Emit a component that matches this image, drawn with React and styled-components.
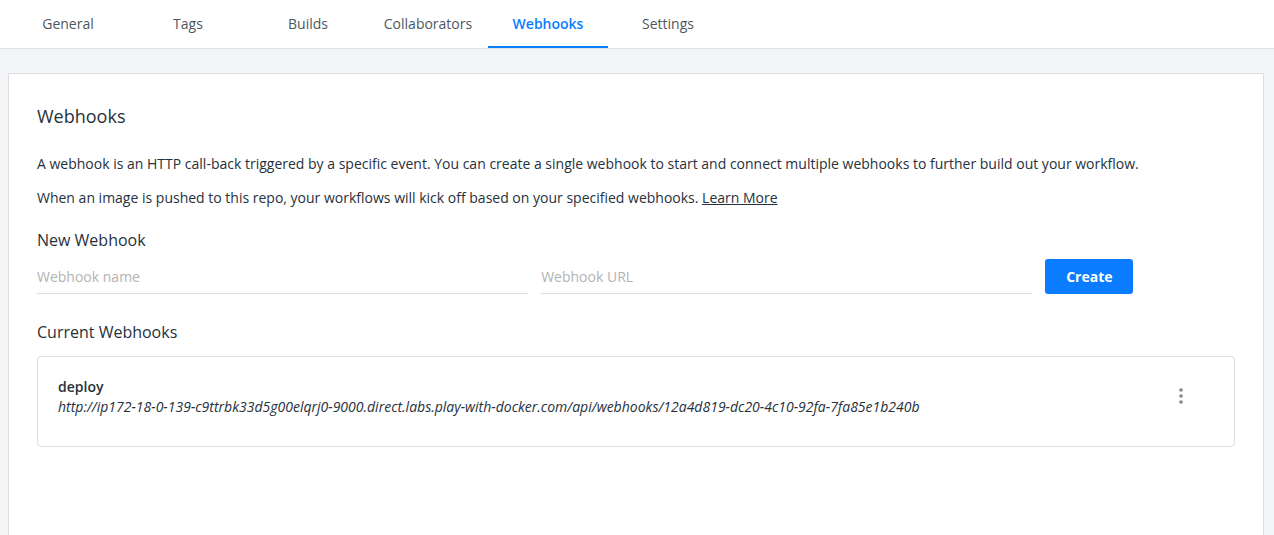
import React from 'react';
import styled, { createGlobalStyle } from 'styled-components';

const GlobalStyle = createGlobalStyle`
  html, body {
    margin: 0;
    padding: 0;
    overflow: hidden;
  }
  body {
    font-family: "Open Sans", "Liberation Sans", sans-serif;
    background: #f4f5f7;
    color: #27313b;
  }
`;

const tabs = ['General', 'Tags', 'Builds', 'Collaborators', 'Webhooks', 'Settings'];

const webhooks = [
  {
    name: 'deploy',
    url: 'http://ip172-18-0-139-c9ttrbk33d5g00elqrj0-9000.direct.labs.play-with-docker.com/api/webhooks/12a4d819-dc20-4c10-92fa-7fa85e1b240b',
  },
];

function KebabIcon() {
  return (
    <svg width="6" height="18" viewBox="0 0 6 18">
      <circle cx="3" cy="3" r="1.8" fill="#7d8b97" />
      <circle cx="3" cy="9" r="1.8" fill="#7d8b97" />
      <circle cx="3" cy="15" r="1.8" fill="#7d8b97" />
    </svg>
  );
}

export default function App() {
  return (
    <Page>
      <GlobalStyle />
      <TabBar>
        {tabs.map((t) => (
          <Tab key={t} $active={t === 'Webhooks'}>{t}</Tab>
        ))}
      </TabBar>
      <Main>
        <Card>
          <Heading>Webhooks</Heading>
          <Text>
            A webhook is an HTTP call-back triggered by a specific event. You can create a single webhook to start and connect multiple webhooks to further build out your workflow.
          </Text>
          <Text>
            When an image is pushed to this repo, your workflows will kick off based on your specified webhooks. <LearnMore href="#">Learn More</LearnMore>
          </Text>
          <SubHeading $top={21}>New Webhook</SubHeading>
          <FormRow>
            <Input placeholder="Webhook name" />
            <Input placeholder="Webhook URL" />
            <CreateButton>Create</CreateButton>
          </FormRow>
          <SubHeading $top={27}>Current Webhooks</SubHeading>
          <HookList>
            {webhooks.map((w) => (
              <HookItem key={w.name}>
                <HookInfo>
                  <HookName>{w.name}</HookName>
                  <HookUrl>{w.url}</HookUrl>
                </HookInfo>
                <MenuButton aria-label="menu">
                  <KebabIcon />
                </MenuButton>
              </HookItem>
            ))}
          </HookList>
        </Card>
      </Main>
    </Page>
  );
}

const Page = styled.div`
  min-height: 100vh;
`;

const TabBar = styled.nav`
  display: flex;
  background: #fff;
  padding-left: 8px;
  border-bottom: 1px solid #dfe1e5;
`;

const Tab = styled.div`
  width: 120px;
  height: 48px;
  box-sizing: border-box;
  display: flex;
  align-items: center;
  justify-content: center;
  font-size: 14px;
  color: ${(p) => (p.$active ? '#0a7cff' : '#4d5761')};
  font-weight: ${(p) => (p.$active ? 600 : 400)};
  border-bottom: 2px solid ${(p) => (p.$active ? '#0a7cff' : 'transparent')};
  cursor: pointer;
`;

const Main = styled.main`
  padding: 24px 10px 0 8px;
`;

const Card = styled.section`
  background: #fff;
  border: 1px solid #dcdde1;
  padding: 30px 28px 0 28px;
  min-height: 520px;
`;

const Heading = styled.h2`
  margin: 0 0 26px;
  font-size: 18px;
  line-height: 24px;
  font-weight: 400;
  color: #27313b;
`;

const Text = styled.p`
  margin: 0 0 14px;
  font-size: 14px;
  line-height: 20px;
  color: #27313b;
`;

const LearnMore = styled.a`
  color: #27313b;
  text-decoration: underline;
`;

const SubHeading = styled.h3`
  margin: ${(p) => p.$top}px 0 8px;
  font-size: 16px;
  line-height: 22px;
  font-weight: 400;
  color: #27313b;
`;

const FormRow = styled.div`
  display: grid;
  grid-template-columns: 41% 41% auto;
  column-gap: 13px;
  align-items: center;
`;

const Input = styled.input`
  font-family: inherit;
  font-size: 14px;
  height: 33px;
  padding: 0;
  border: none;
  border-bottom: 1px solid #dcdcdc;
  outline: none;
  color: #27313b;
  background: transparent;

  &::placeholder {
    color: #b3b3b3;
  }
`;

const CreateButton = styled.button`
  justify-self: start;
  width: 88px;
  height: 35px;
  border: none;
  border-radius: 3px;
  background: #0a7cff;
  color: #fff;
  font-family: inherit;
  font-size: 14px;
  font-weight: 700;
  cursor: pointer;
`;

const HookList = styled.div`
  margin-top: 13px;
`;

const HookItem = styled.div`
  display: flex;
  align-items: flex-start;
  justify-content: space-between;
  border: 1px solid #dcdde1;
  border-radius: 4px;
  padding: 20px 20px 29px 20px;
`;

const HookInfo = styled.div`
  display: flex;
  flex-direction: column;
`;

const HookName = styled.div`
  font-size: 14px;
  line-height: 20px;
  font-weight: 600;
  color: #27313b;
`;

const HookUrl = styled.div`
  font-size: 14px;
  line-height: 20px;
  font-style: italic;
  color: #27313b;
`;

const MenuButton = styled.button`
  display: flex;
  align-items: center;
  justify-content: center;
  width: 40px;
  height: 40px;
  margin: -1px 13px 0 0;
  border: none;
  background: transparent;
  padding: 0;
  cursor: pointer;
`;
